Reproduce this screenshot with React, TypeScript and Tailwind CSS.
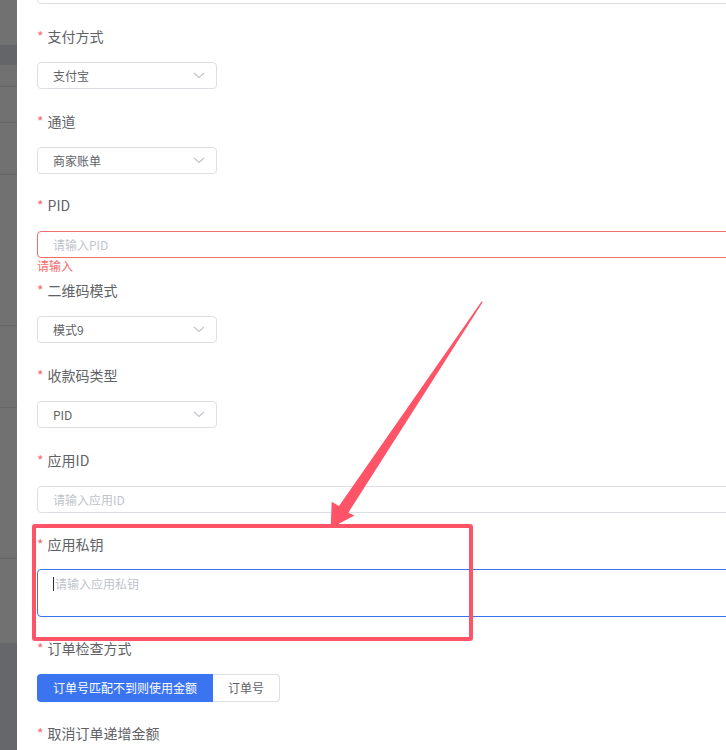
import React from "react";

const FONT = { fontFamily: '"Noto Sans CJK SC", "Noto Sans", sans-serif' };

function Label({ text }: { text: string }) {
  return (
    <div className="flex h-[20px] items-center pb-[2px] text-[14px] leading-[18px] text-[#606266]">
      <span className="mr-[4px] text-[#f56c6c]">*</span>
      <span>{text}</span>
    </div>
  );
}

function Chevron() {
  return (
    <svg width="12" height="7" viewBox="0 0 12 7" fill="none">
      <path d="M1 1 L6 5.5 L11 1" stroke="#c0c4cc" strokeWidth="1.1" />
    </svg>
  );
}

function Select({ value }: { value: string }) {
  return (
    <div className="flex h-[27px] w-[180px] items-center justify-between rounded-[4px] border border-[#dcdfe6] pl-[15px] pr-[11px] text-[12px] text-[#606266]">
      <span>{value}</span>
      <Chevron />
    </div>
  );
}

function Input({ placeholder, error }: { placeholder: string; error?: boolean }) {
  return (
    <div
      className={
        error
          ? "flex h-[27px] w-[760px] items-center rounded-[4px] border border-[#f56c6c] pl-[15px] text-[12px] text-[#c0c4cc]"
          : "flex h-[27px] w-[760px] items-center rounded-[4px] border border-[#dcdfe6] pl-[15px] text-[12px] text-[#c0c4cc]"
      }
    >
      {placeholder}
    </div>
  );
}

function Item({ label, children, tail }: { label: string; children: React.ReactNode; tail: React.ReactNode }) {
  return (
    <div className="flex flex-col">
      <Label text={label} />
      <div className="mt-[15px]">{children}</div>
      {tail}
    </div>
  );
}

export default function App() {
  return (
    <div className="relative flex h-[750px] w-[726px] overflow-hidden bg-white" style={FONT}>
      {/* backdrop strip */}
      <div className="flex w-[17px] shrink-0 flex-col bg-[#717171]">
        <div className="h-[45px]" />
        <div className="h-[20px] bg-[#646568]" />
        <div className="h-[21px]" />
        <div className="h-px bg-[#666]" />
        <div className="h-[35px]" />
        <div className="h-px bg-[#666]" />
        <div className="h-[51px]" />
        <div className="h-px bg-[#666]" />
        <div className="h-[150px]" />
        <div className="h-px bg-[#666]" />
        <div className="h-[81px]" />
        <div className="h-px bg-[#666]" />
        <div className="h-[150px]" />
        <div className="h-px bg-[#666]" />
        <div className="h-[84px]" />
        <div className="flex-1 bg-[#66676a]" />
      </div>

      {/* drawer panel */}
      <div className="flex-1 bg-white pl-[20px]">
        <div className="-mt-[23px] flex flex-col">
          <div className="h-[27px] w-[760px] rounded-[4px] border border-[#dcdfe6]" />
          <div className="h-[23px]" />

          <Item label="支付方式" tail={<div className="h-[23px]" />}>
            <Select value="支付宝" />
          </Item>
          <Item label="通道" tail={<div className="h-[22px]" />}>
            <Select value="商家账单" />
          </Item>
          <Item
            label="PID"
            tail={
              <div className="h-[23px] pt-px text-[12px] leading-[14px] text-[#f56c6c]">请输入</div>
            }
          >
            <Input placeholder="请输入PID" error />
          </Item>
          <Item label="二维码模式" tail={<div className="h-[23px]" />}>
            <Select value="模式9" />
          </Item>
          <Item label="收款码类型" tail={<div className="h-[23px]" />}>
            <Select value="PID" />
          </Item>
          <Item label="应用ID" tail={<div className="h-[22px]" />}>
            <Input placeholder="请输入应用ID" />
          </Item>
          <div className="flex flex-col">
            <Label text="应用私钥" />
            <div className="mt-[14px] h-[48px] w-[760px] rounded-[4px] border border-[#3b72ee] pl-[15px] pt-[3px] text-[12px] leading-[18px] text-[#c0c4cc]">
              <span className="mr-[1px] inline-block h-[14px] w-px bg-[#303133] align-middle" />
              <span className="align-middle">请输入应用私钥</span>
            </div>
            <div className="h-[22px]" />
          </div>
          <div className="flex flex-col">
            <Label text="订单检查方式" />
            <div className="mt-[15px] flex h-[28px] text-[12px]">
              <div className="flex items-center rounded-l-[4px] bg-[#3b74f0] px-[16px] text-white">
                订单号匹配不到则使用金额
              </div>
              <div className="flex items-center rounded-r-[4px] border border-l-0 border-[#dcdfe6] px-[15px] text-[#606266]">
                订单号
              </div>
            </div>
            <div className="h-[22px]" />
          </div>
          <Label text="取消订单递增金额" />
        </div>
      </div>

      {/* annotation: red box */}
      <div className="pointer-events-none absolute left-[32px] top-[524px] h-[117px] w-[441px] rounded-[3px] border-[4px] border-[#ff5468]" />

      {/* annotation: arrow */}
      <svg
        className="pointer-events-none absolute left-0 top-0"
        width="726"
        height="750"
        viewBox="0 0 726 750"
      >
        <polygon
          points="481.7,301.2 482.6,302.2 348.3,512.7 354.5,515.5 330.7,528 331.7,501.7 339,506"
          fill="#ff5468"
        />
      </svg>
    </div>
  );
}
